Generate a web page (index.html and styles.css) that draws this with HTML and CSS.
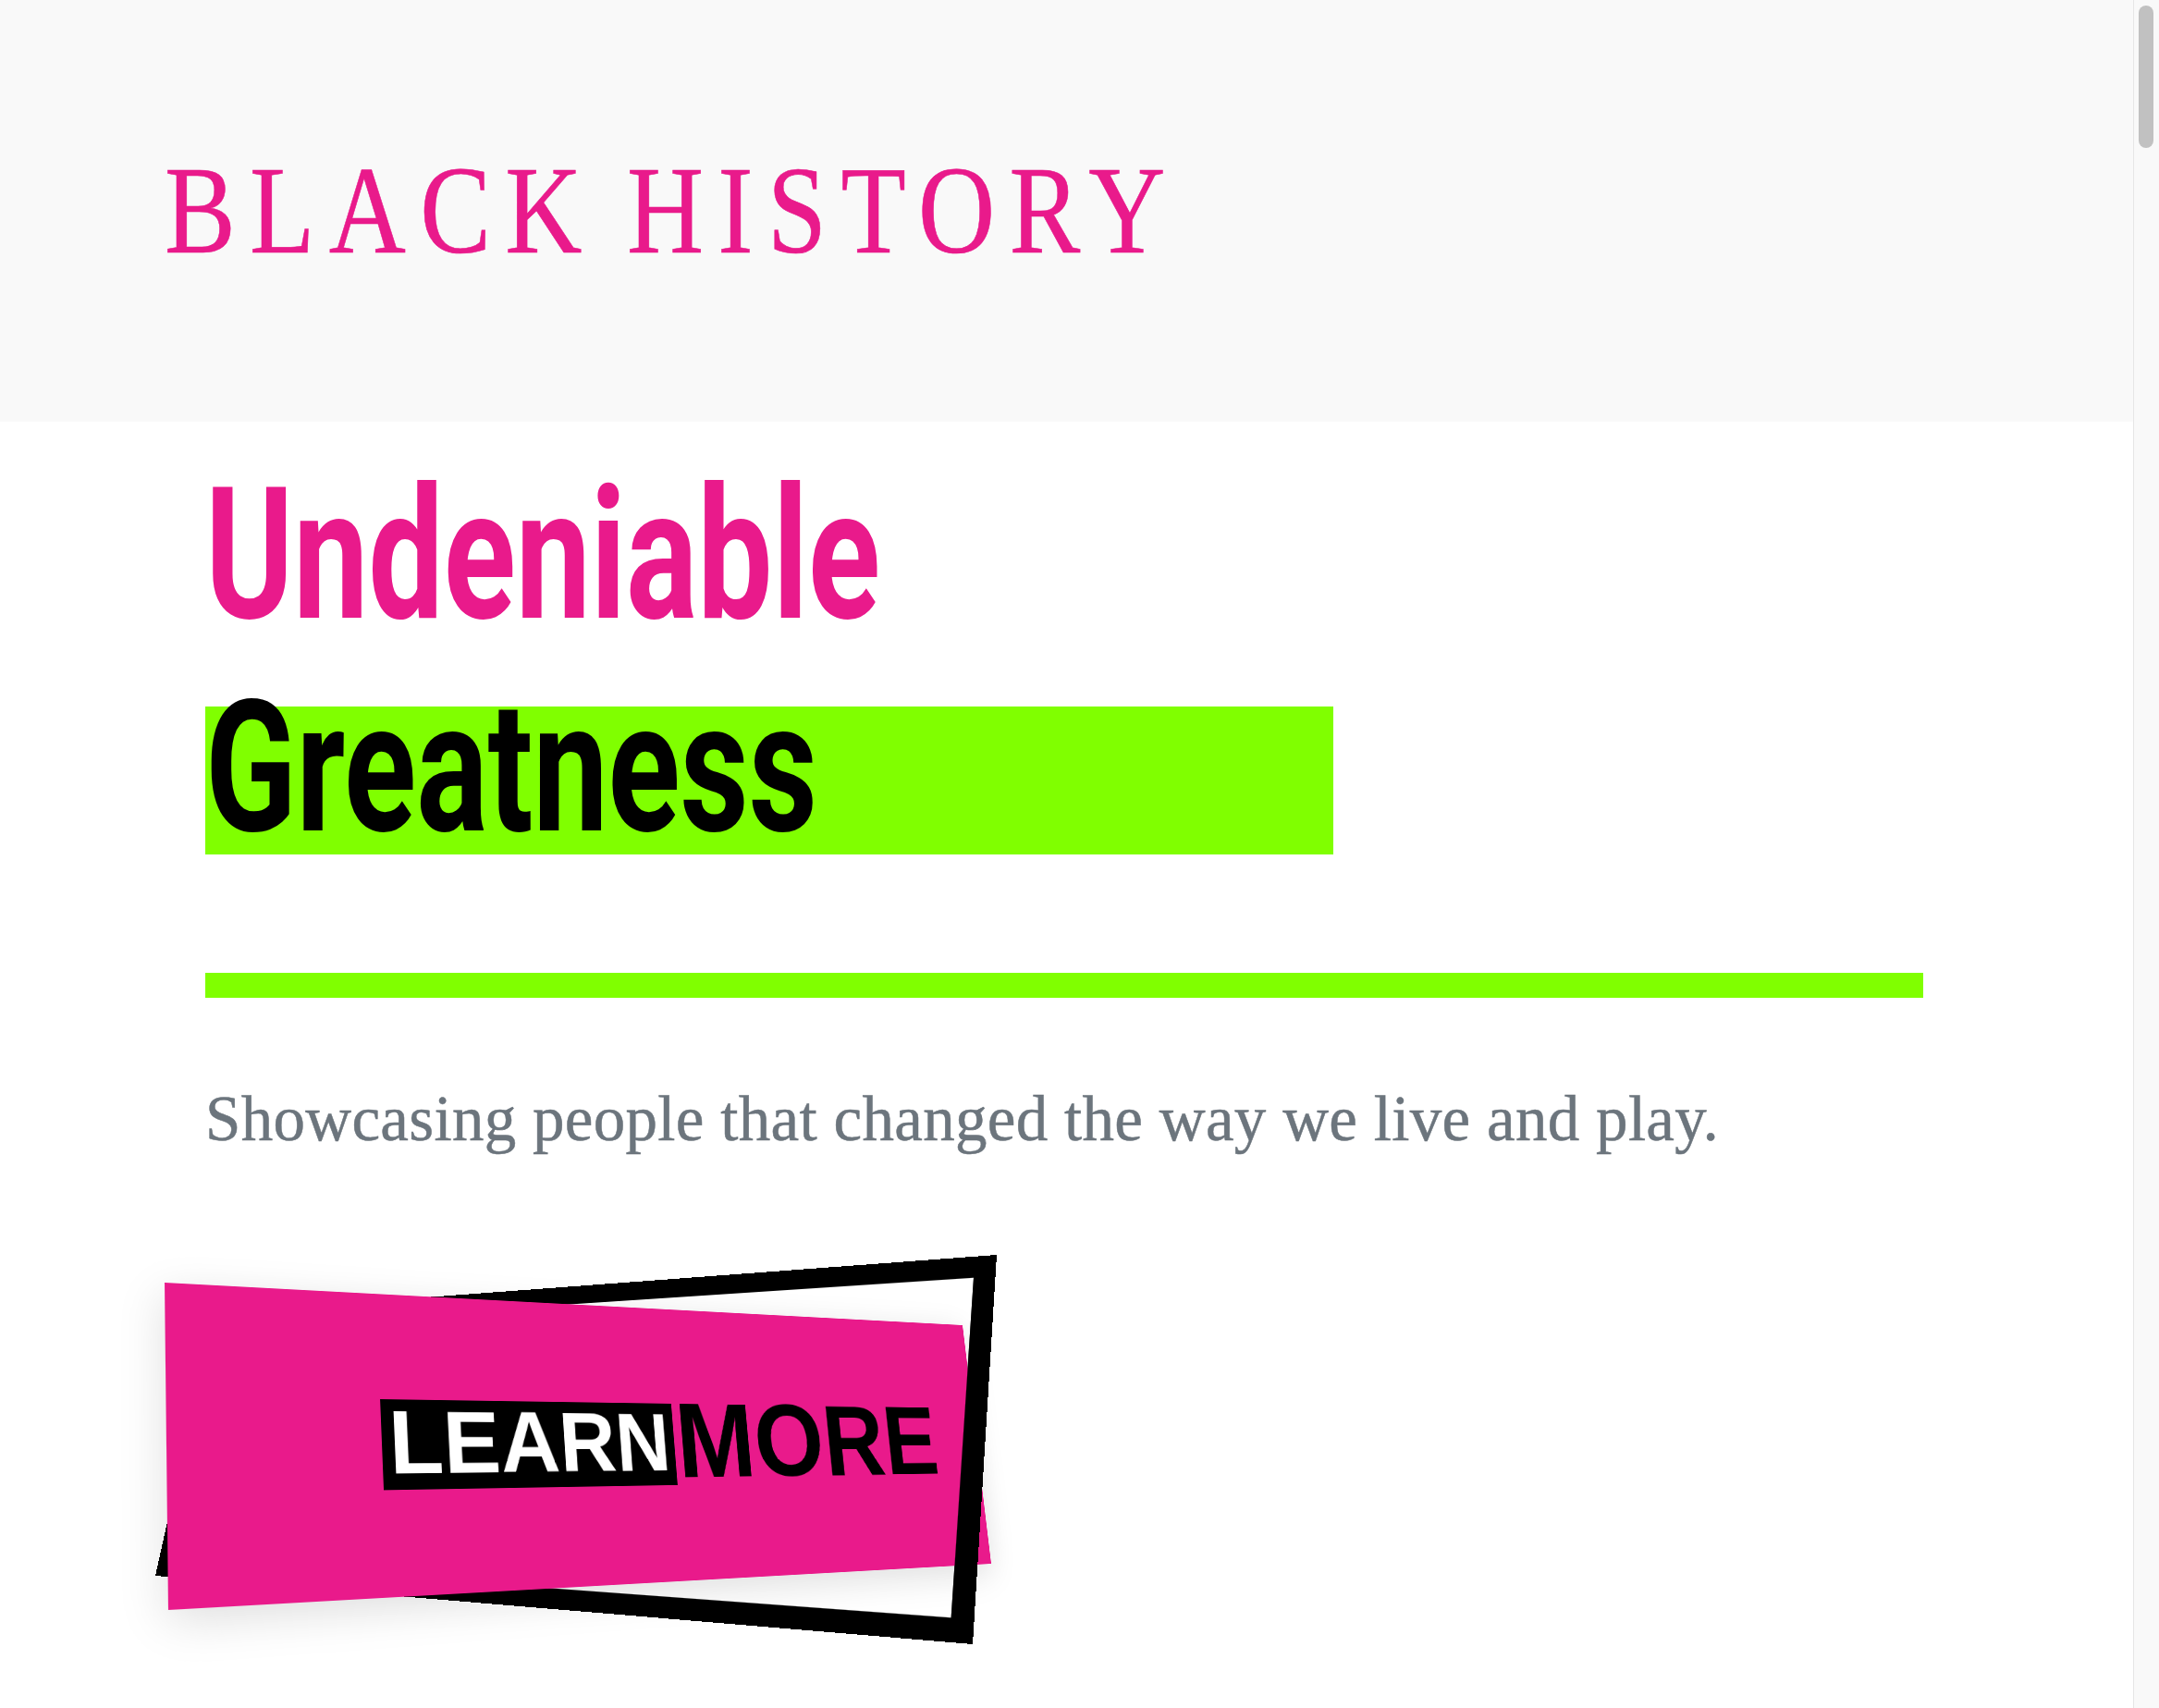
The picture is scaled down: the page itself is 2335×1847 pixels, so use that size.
FILE: index.html
```html
<!DOCTYPE html>
<html lang="en">
<head>
<meta charset="utf-8">
<title>Black History</title>
<link rel="stylesheet" href="styles.css">
</head>
<body>
<div class="viewport">
  <div class="page">
    <header class="masthead">
      <span class="brand">BLACK HISTORY</span>
    </header>
    <main class="hero">
      <h1 class="title">
        <span class="title-line"><span class="title-word">Undeniable</span></span>
        <span class="title-line highlight"><span class="title-word">Greatness</span></span>
      </h1>
      <div class="rule"></div>
      <p class="lead">Showcasing people that changed the way we live and play.</p>
      <a class="cta" href="#">
        <span class="cta-frame"></span>
        <span class="cta-face">
          <span class="cta-learn">LEARN</span><span class="cta-more">MORE</span>
        </span>
        <span class="cta-frame cta-frame-front"></span>
      </a>
    </main>
  </div>
  <div class="scrollbar"><div class="thumb"></div></div>
</div>
</body>
</html>
```
FILE: styles.css
```css
* { box-sizing: border-box; }
html, body { margin: 0; padding: 0; background: #fff; }

.viewport {
  display: flex;
  height: 1847px;
  overflow: hidden;
}
.page { flex: 1; min-width: 0; }

/* header */
.masthead {
  height: 456px;
  background: #f9f9f9;
  display: flex;
  align-items: center;
  padding-left: 178px;
}
.brand {
  display: inline-block;
  font-family: "Liberation Serif", "Times New Roman", serif;
  font-size: 135.5px;
  line-height: 1;
  letter-spacing: 18px;
  word-spacing: -13px;
  color: #e91a8b;
  white-space: nowrap;
  -webkit-text-stroke: 0.6px #e91a8b;
  transform: scaleX(0.85);
  transform-origin: 0 50%;
}

/* hero */
.hero { padding: 44px 227px 0 222px; }

.title {
  margin: 0;
  font-family: Roboto, "Liberation Sans", sans-serif;
  font-weight: 700;
  font-size: 198px;
  line-height: 200px;
  color: #e91a8b;
}
.title-line { display: block; white-space: nowrap; }
.title-word {
  display: inline-block;
  transform: scaleX(0.73);
  transform-origin: 0 50%;
}
.highlight {
  margin-top: 64px;
  width: 1220px;
  height: 160px;
  line-height: 132px;
  background: #80ff00;
  color: #000;
}

.rule {
  margin-top: 128px;
  height: 27px;
  background: #80ff00;
}

.lead {
  margin: 90px 0 0;
  font-family: "Liberation Serif", "Times New Roman", serif;
  font-size: 69px;
  line-height: 82.8px;
  letter-spacing: 0.3px;
  color: #6c757d;
  -webkit-text-stroke: 0.5px #6c757d;
}

/* call to action button */
.cta {
  display: block;
  position: relative;
  margin: 88px 0 0 -62px;
  width: 930px;
  height: 450px;
  text-decoration: none;
}
.cta-frame,
.cta-face {
  position: absolute;
  left: 0;
  top: 0;
  width: 1101px;
  height: 354px;
  transform-origin: 0 0;
}
.cta-frame {
  border: 21px solid #000;
  transform: matrix3d(0.505477, -0.062107, 0, -0.00028739, -0.179124, 0.749661, 0, -0.00014453, 0, 0, 1, 0, 71, 80, 0, 1);
}
.cta-frame-front {
  border-color: transparent #000 transparent transparent;
}
.cta-face {
  display: flex;
  align-items: flex-start;
  padding: 126px 0 0 230px;
  background: #e91a8b;
  box-shadow: 0 12px 45px rgba(0, 0, 0, 0.13);
  font-family: "Liberation Sans", Arial, sans-serif;
  font-weight: 700;
  white-space: nowrap;
  transform: matrix3d(1.074905, 0.072507, 0, 0.00033039, 0.008627, 0.951282, 0, -0.00012149, 0, 0, 1, 0, 18, 47, 0, 1);
}
.cta-learn {
  background: #000;
  color: #fff;
  font-size: 105px;
  line-height: 102.5px;
  padding: 0 6px 3px 8px;
}
.cta-more {
  color: #000;
  font-size: 140px;
  line-height: 96.6px;
  margin-left: 3px;
}

/* fake scrollbar */
.scrollbar {
  width: 28px;
  flex: none;
  background: #f9f9f9;
  border-left: 1px solid #e6e6e6;
  padding: 6px 6px 0 5px;
}
.thumb {
  height: 154px;
  border-radius: 8px;
  background: #c1c1c1;
}
```
